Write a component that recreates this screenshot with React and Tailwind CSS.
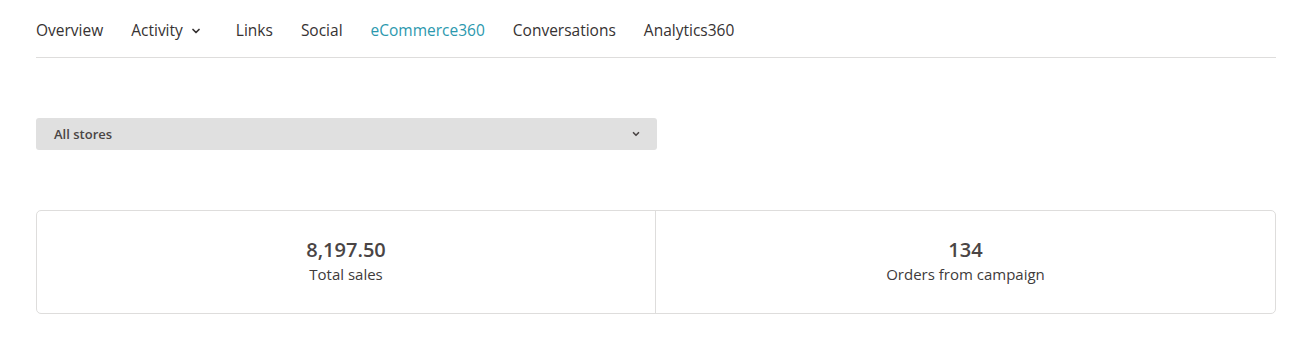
import { ChevronDown } from 'lucide-react';

const tabs = ['Overview', 'Activity', 'Links', 'Social', 'eCommerce360', 'Conversations', 'Analytics360'];

export default function App() {
  return (
    <div className="min-h-[354px] bg-white px-9 font-['Open_Sans',sans-serif] text-[#403b3b]">
      <nav className="flex items-center gap-7 border-b border-[#dedddc] pt-[19px] pb-[15px] text-[15.5px] font-medium">
        {tabs.map((tab) => (
          <a
            key={tab}
            href="#"
            className={
              tab === 'eCommerce360'
                ? 'text-[#2b98ae]'
                : 'flex items-center text-[#363232]'
            }
          >
            {tab}
            {tab === 'Activity' && (
              <ChevronDown className="mr-[6px] ml-[7px] h-[12px] w-[12px]" strokeWidth={3.5} />
            )}
          </a>
        ))}
      </nav>

      <div className="mt-[60px] flex h-8 w-[621px] items-center justify-between rounded-[3px] bg-[#e0e0e0] pl-[18px] pr-4 text-[13px] font-semibold text-[#4a4545]">
        <span className="pt-px">All stores</span>
        <ChevronDown className="h-[10px] w-[10px]" strokeWidth={4} />
      </div>

      <div className="mt-[60px] grid h-[104px] grid-cols-2 rounded-[5px] border border-[#dedddc]">
        <div className="flex flex-col items-center justify-center border-r border-[#dedddc] pb-1">
          <div className="text-[20px] leading-7 font-semibold text-[#4a4545]">8,197.50</div>
          <div className="text-[15px] leading-5">Total sales</div>
        </div>
        <div className="flex flex-col items-center justify-center pb-1">
          <div className="text-[20px] leading-7 font-semibold text-[#4a4545]">134</div>
          <div className="text-[15px] leading-5">Orders from campaign</div>
        </div>
      </div>
    </div>
  );
}
